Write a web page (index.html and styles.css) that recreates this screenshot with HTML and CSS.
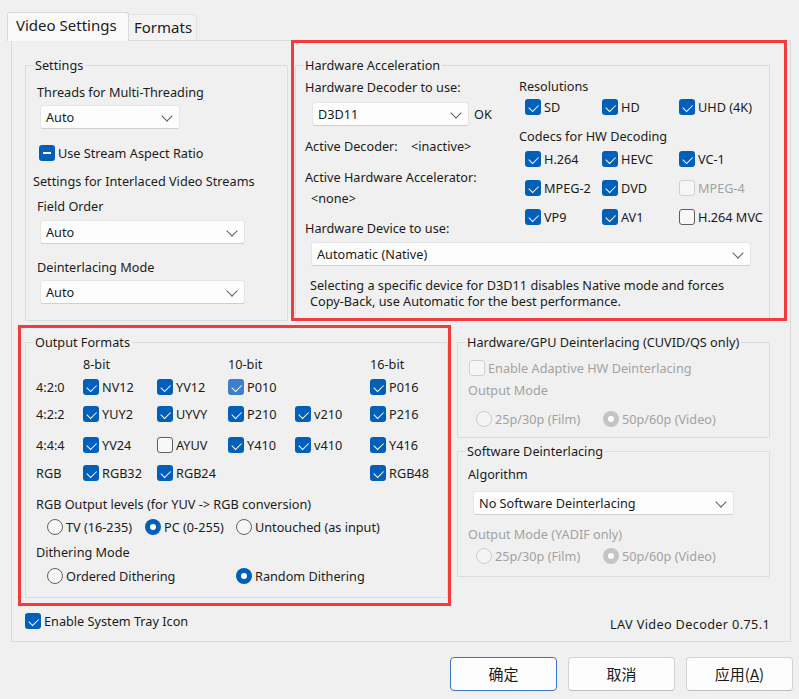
FILE: index.html
```html
<!DOCTYPE html>
<html lang="en">
<head>
<meta charset="utf-8">
<title>LAV Video Decoder Properties</title>
<link rel="stylesheet" href="styles.css">
</head>
<body>
<div class="dialog">
  <div class="tabs">
    <div class="tab active">Video Settings</div>
    <div class="tab inactive">Formats</div>
  </div>

  <div class="panel">
    <div class="row-top">
      <fieldset class="group g-settings">
        <legend>Settings</legend>
        <div class="gbody pl7">
          <div class="lbl ind4 s-l1">Threads for Multi-Threading</div>
          <div class="combo w140 s-c1">Auto</div>
          <div class="opt s-chk"><span class="cb mixed"></span>Use Stream Aspect Ratio</div>
          <div class="lbl s-l2">Settings for Interlaced Video Streams</div>
          <div class="lbl ind4 s-l3">Field Order</div>
          <div class="combo w205 s-c2">Auto</div>
          <div class="lbl ind4 s-l4">Deinterlacing Mode</div>
          <div class="combo w205 s-c3">Auto</div>
        </div>
      </fieldset>

      <fieldset class="group g-hw">
        <legend>Hardware Acceleration</legend>
        <div class="gbody pl9 hw-grid">
          <div class="hw-left">
            <div class="lbl h-l1">Hardware Decoder to use:</div>
            <div class="combo-row h-c1">
              <div class="combo w157">D3D11</div>
              <span class="ok">OK</span>
            </div>
            <div class="pair h-l2"><span class="pair-key">Active Decoder:</span><span>&lt;inactive&gt;</span></div>
            <div class="lbl h-l3">Active Hardware Accelerator:</div>
            <div class="lbl h-l4">&lt;none&gt;</div>
            <div class="lbl h-l5">Hardware Device to use:</div>
          </div>
          <div class="hw-right">
            <div class="lbl r-l1">Resolutions</div>
            <div class="cb-grid r-g1">
              <div class="opt"><span class="cb on"></span>SD</div>
              <div class="opt"><span class="cb on"></span>HD</div>
              <div class="opt"><span class="cb on"></span>UHD (4K)</div>
            </div>
            <div class="lbl r-l2">Codecs for HW Decoding</div>
            <div class="cb-grid r-g2">
              <div class="opt"><span class="cb on"></span>H.264</div>
              <div class="opt"><span class="cb on"></span>HEVC</div>
              <div class="opt"><span class="cb on"></span>VC-1</div>
              <div class="opt"><span class="cb on"></span>MPEG-2</div>
              <div class="opt"><span class="cb on"></span>DVD</div>
              <div class="opt disabled"><span class="cb dis"></span>MPEG-4</div>
              <div class="opt"><span class="cb on"></span>VP9</div>
              <div class="opt"><span class="cb on"></span>AV1</div>
              <div class="opt"><span class="cb off"></span>H.264 MVC</div>
            </div>
          </div>
          <div class="hw-device">
            <div class="combo w440 d-c1">Automatic (Native)</div>
            <div class="desc">
              <div class="desc-line">Selecting a specific device for D3D11 disables Native mode and forces</div>
              <div class="desc-line">Copy-Back, use Automatic for the best performance.</div>
            </div>
          </div>
        </div>
      </fieldset>
    </div>

    <div class="row-bottom">
      <fieldset class="group g-output">
        <legend>Output Formats</legend>
        <div class="gbody pl10">
          <div class="fmt-grid">
            <div></div><div>8-bit</div><div></div><div>10-bit</div><div></div><div>16-bit</div>

            <div>4:2:0</div>
            <div class="opt"><span class="cb on"></span>NV12</div>
            <div class="opt"><span class="cb on"></span>YV12</div>
            <div class="opt"><span class="cb on soft"></span>P010</div>
            <div></div>
            <div class="opt"><span class="cb on"></span>P016</div>

            <div>4:2:2</div>
            <div class="opt"><span class="cb on"></span>YUY2</div>
            <div class="opt"><span class="cb on"></span>UYVY</div>
            <div class="opt"><span class="cb on"></span>P210</div>
            <div class="opt"><span class="cb on"></span>v210</div>
            <div class="opt"><span class="cb on"></span>P216</div>

            <div>4:4:4</div>
            <div class="opt"><span class="cb on"></span>YV24</div>
            <div class="opt"><span class="cb off"></span>AYUV</div>
            <div class="opt"><span class="cb on"></span>Y410</div>
            <div class="opt"><span class="cb on"></span>v410</div>
            <div class="opt"><span class="cb on"></span>Y416</div>

            <div>RGB</div>
            <div class="opt"><span class="cb on"></span>RGB32</div>
            <div class="opt"><span class="cb on"></span>RGB24</div>
            <div></div>
            <div></div>
            <div class="opt"><span class="cb on"></span>RGB48</div>
          </div>
          <div class="lbl o-l1">RGB Output levels (for YUV -&gt; RGB conversion)</div>
          <div class="rd-grid o-r1">
            <div class="opt"><span class="rd"></span>TV (16-235)</div>
            <div class="opt"><span class="rd on"></span>PC (0-255)</div>
            <div class="opt"><span class="rd"></span>Untouched (as input)</div>
          </div>
          <div class="lbl o-l2">Dithering Mode</div>
          <div class="rd-grid o-r2">
            <div class="opt"><span class="rd"></span>Ordered Dithering</div>
            <div></div>
            <div class="opt"><span class="rd on"></span>Random Dithering</div>
          </div>
        </div>
      </fieldset>

      <div class="right-col">
        <fieldset class="group g-hwdeint">
          <legend>Hardware/GPU Deinterlacing (CUVID/QS only)</legend>
          <div class="gbody pl10">
            <div class="opt disabled d-chk"><span class="cb dis"></span>Enable Adaptive HW Deinterlacing</div>
            <div class="lbl disabled d-l1">Output Mode</div>
            <div class="rd-grid2 d-r1">
              <div class="opt disabled"><span class="rd dis"></span>25p/30p (Film)</div>
              <div class="opt disabled"><span class="rd dis on"></span>50p/60p (Video)</div>
            </div>
          </div>
        </fieldset>
        <fieldset class="group g-swdeint">
          <legend>Software Deinterlacing</legend>
          <div class="gbody pl10">
            <div class="lbl w-l1">Algorithm</div>
            <div class="combo w261 w-c1">No Software Deinterlacing</div>
            <div class="lbl disabled w-l2">Output Mode (YADIF only)</div>
            <div class="rd-grid2 w-r1">
              <div class="opt disabled"><span class="rd dis"></span>25p/30p (Film)</div>
              <div class="opt disabled"><span class="rd dis on"></span>50p/60p (Video)</div>
            </div>
          </div>
        </fieldset>
      </div>
    </div>

    <div class="footer-row">
      <div class="opt"><span class="cb on"></span>Enable System Tray Icon</div>
      <span class="version">LAV Video Decoder 0.75.1</span>
    </div>
  </div>

  <div class="buttons">
    <button class="btn primary">确定</button>
    <button class="btn">取消</button>
    <button class="btn">应用(<u>A</u>)</button>
  </div>

  <div class="mark mark-hw"></div>
  <div class="mark mark-output"></div>
</div>
</body>
</html>
```

FILE: styles.css
```css
* { box-sizing: border-box; }

html, body { margin: 0; padding: 0; }

body {
  width: 799px;
  height: 699px;
  overflow: hidden;
  background: #f0f0f0;
  color: #1b1b1b;
  font-family: "Noto Sans", "Noto Sans CJK SC", sans-serif;
  font-size: 12.7px;
  line-height: 16px;
}

.dialog {
  position: relative;
  width: 799px;
  height: 699px;
  padding-top: 12px;
}

/* ---------- tabs ---------- */
.tabs {
  display: flex;
  align-items: flex-end;
  height: 29px;
  margin-left: 7px;
  margin-bottom: -1px;
  position: relative;
  z-index: 1;
}

.tab {
  font-size: 15px;
  line-height: 20px;
  white-space: nowrap;
}

.tab.active {
  width: 122px;
  height: 29px;
  padding: 2px 0 0 8px;
  background: #f9f9f9;
  border: 1px solid #d9d9d9;
  border-bottom: none;
  border-radius: 3px 3px 0 0;
}

.tab.inactive {
  width: 68px;
  height: 26px;
  margin-bottom: 1px;
  padding: 2px 0 0 5px;
  background: #f3f3f3;
  border: 1px solid #e2e2e2;
  border-bottom: none;
  border-left: none;
  border-radius: 0 3px 0 0;
}

/* ---------- panel ---------- */
.panel {
  margin-left: 11px;
  width: 780px;
  height: 602px;
  border: 1px solid #dadada;
  padding: 16px 20px 0 13px;
}

.group {
  margin: 0;
  padding: 0;
  min-width: 0;
  border: 1px solid #dcdcdc;
  border-radius: 1px;
}

.group legend {
  margin-left: 7px;
  padding: 0 2px;
  line-height: 16px;
  white-space: nowrap;
}

.pl7 { padding-left: 7px; }
.pl9 { padding-left: 9px; }
.pl10 { padding-left: 10px; }

.lbl { white-space: nowrap; height: 16px; }

.disabled { color: #a2a2a2; }

.ind4 { margin-left: 4px; }

/* ---------- controls ---------- */
.opt {
  display: flex;
  align-items: center;
  gap: 3px;
  height: 16px;
  white-space: nowrap;
}

.cb {
  position: relative;
  flex: none;
  width: 16px;
  height: 16px;
  border-radius: 3px;
}

.cb.on { background: #005fb8; }
.cb.on.soft { background: #3b80cc; }

.cb.on::after {
  content: "";
  position: absolute;
  left: 4.2px;
  top: 4.6px;
  width: 8px;
  height: 4.5px;
  border-left: 1.3px solid #fff;
  border-bottom: 1.3px solid #fff;
  transform: rotate(-45deg);
}

.cb.mixed { background: #005fb8; }
.cb.mixed::after {
  content: "";
  position: absolute;
  left: 4px;
  top: 7px;
  width: 8px;
  height: 1.6px;
  background: #fff;
}

.cb.off { background: #f8f8f8; border: 1px solid #5e5e5e; }
.cb.dis { background: #f6f6f6; border: 1px solid #d0d0d0; }

.rd {
  position: relative;
  flex: none;
  width: 16px;
  height: 16px;
  border-radius: 50%;
  background: #f6f6f6;
  border: 1px solid #646464;
}

.rd.on { background: #005fb8; border: none; }
.rd.on::after {
  content: "";
  position: absolute;
  left: 5px;
  top: 5px;
  width: 6px;
  height: 6px;
  border-radius: 50%;
  background: #fff;
}

.rd.dis { background: #f4f4f4; border: 1px solid #cdcdcd; }
.rd.dis.on { background: #c4c4c4; border: none; }

.combo {
  position: relative;
  height: 24px;
  padding-left: 5px;
  line-height: 22px;
  background: #fdfdfd;
  border: 1px solid #e6e6e6;
  border-bottom-color: #cfcfcf;
  border-radius: 3px;
  white-space: nowrap;
}

.combo::after {
  content: "";
  position: absolute;
  right: 8px;
  top: 6px;
  width: 7px;
  height: 7px;
  border-right: 1px solid #606060;
  border-bottom: 1px solid #606060;
  transform: rotate(45deg);
}

.w140 { width: 140px; }
.w157 { width: 157px; }
.w205 { width: 205px; }
.w261 { width: 261px; }
.w440 { width: 440px; }

/* ---------- top row ---------- */
.row-top {
  display: flex;
  gap: 7px;
  height: 264px;
}

.g-settings { width: 263px; }

.s-l1 { margin-top: 11px; }
.s-c1 { margin: 5px 0 0 7px; }
.s-chk { margin: 16px 0 0 6px; }
.s-l2 { margin-top: 12px; }
.s-l3 { margin-top: 9px; }
.s-c2 { margin: 6px 0 0 7px; }
.s-l4 { margin-top: 15px; }
.s-c3 { margin: 5px 0 0 7px; }

.g-hw {
  width: 475px;
  padding-bottom: 12px;
}

.hw-grid {
  display: grid;
  grid-template-columns: 214px 1fr;
}

.h-l1 { margin-top: 6px; }

.combo-row {
  display: flex;
  align-items: center;
  gap: 5px;
  margin: 7px 0 0 7px;
}

.pair { display: flex; white-space: nowrap; height: 16px; }
.pair-key { width: 106px; }

.h-l2 { margin-top: 12px; }
.h-l3 { margin-top: 15px; }
.h-l4 { margin: 5px 0 0 6px; }
.h-l5 { margin-top: 14px; }

.hw-right { padding-top: 5px; }

.cb-grid {
  display: grid;
  grid-template-columns: 77px 77px auto;
  margin-left: 6px;
}

.r-g1 { margin-top: 5px; }
.r-l2 { margin-top: 13px; }
.r-g2 { margin-top: 7px; row-gap: 13px; }

.hw-device { grid-column: 1 / -1; }

.d-c1 { margin: 6px 0 0 6px; }

.desc {
  margin: 11px 0 0 5px;
}

.desc-line {
  height: 16px;
  line-height: 16px;
  white-space: nowrap;
}

/* ---------- bottom row ---------- */
.row-bottom {
  display: flex;
  align-items: flex-start;
  gap: 9px;
  margin-top: 13px;
}

.g-output {
  width: 423px;
  padding-bottom: 13px;
}

.fmt-grid {
  display: grid;
  grid-template-columns: 47px 74px 71px 67px 75px auto;
  grid-template-rows: 16px 30px 24px 38px 18px;
  align-items: center;
  margin-top: 6px;
  white-space: nowrap;
}

.o-l1 { margin-top: 14px; }
.o-l2 { margin-top: 9px; }

.rd-grid {
  display: grid;
  grid-template-columns: 98px 91px auto;
  margin-left: 11px;
}

.o-r1 { margin-top: 7px; }
.o-r2 { margin-top: 8px; }

.right-col {
  display: flex;
  flex-direction: column;
  gap: 5px;
  width: 313px;
}

.g-hwdeint { padding-bottom: 10px; }
.g-swdeint { padding-bottom: 12px; }

.d-chk { margin: 10px 0 0 1px; }
.d-l1 { margin-top: 6px; }

.rd-grid2 {
  display: grid;
  grid-template-columns: 127px auto;
  margin-left: 8px;
}

.d-r1 { margin-top: 13px; }

.w-l1 { margin-top: 7px; }
.w-c1 { margin: 9px 0 0 5px; }
.w-l2 { margin-top: 11px; }
.w-r1 { margin-top: 6px; }

/* ---------- footer ---------- */
.footer-row {
  display: flex;
  justify-content: space-between;
  align-items: flex-start;
  margin-top: 15px;
}

.version {
  margin-top: 3px;
  white-space: nowrap;
  letter-spacing: 0.35px;
}

.buttons {
  display: flex;
  justify-content: flex-end;
  gap: 11px;
  margin-top: 15px;
  padding-right: 6px;
}

.btn {
  width: 107px;
  height: 34px;
  margin: 0;
  padding: 0;
  background: #fdfdfd;
  border: 1px solid #d3d3d3;
  border-bottom-color: #bdbdbd;
  border-radius: 4px;
  color: #1b1b1b;
  font-family: "Noto Sans CJK SC", "Noto Sans", sans-serif;
  font-size: 15px;
  line-height: 20px;
}

.btn.primary {
  border: 1px solid #3a78c2;
  box-shadow: inset 0 0 0 1px #ffffff;
}

/* ---------- annotation marks ---------- */
.mark {
  position: absolute;
  border: 3px solid #f23b3b;
  pointer-events: none;
}

.mark-hw {
  left: 291px;
  top: 40px;
  width: 496px;
  height: 281px;
}

.mark-output {
  left: 18px;
  top: 325px;
  width: 433px;
  height: 281px;
}
```
